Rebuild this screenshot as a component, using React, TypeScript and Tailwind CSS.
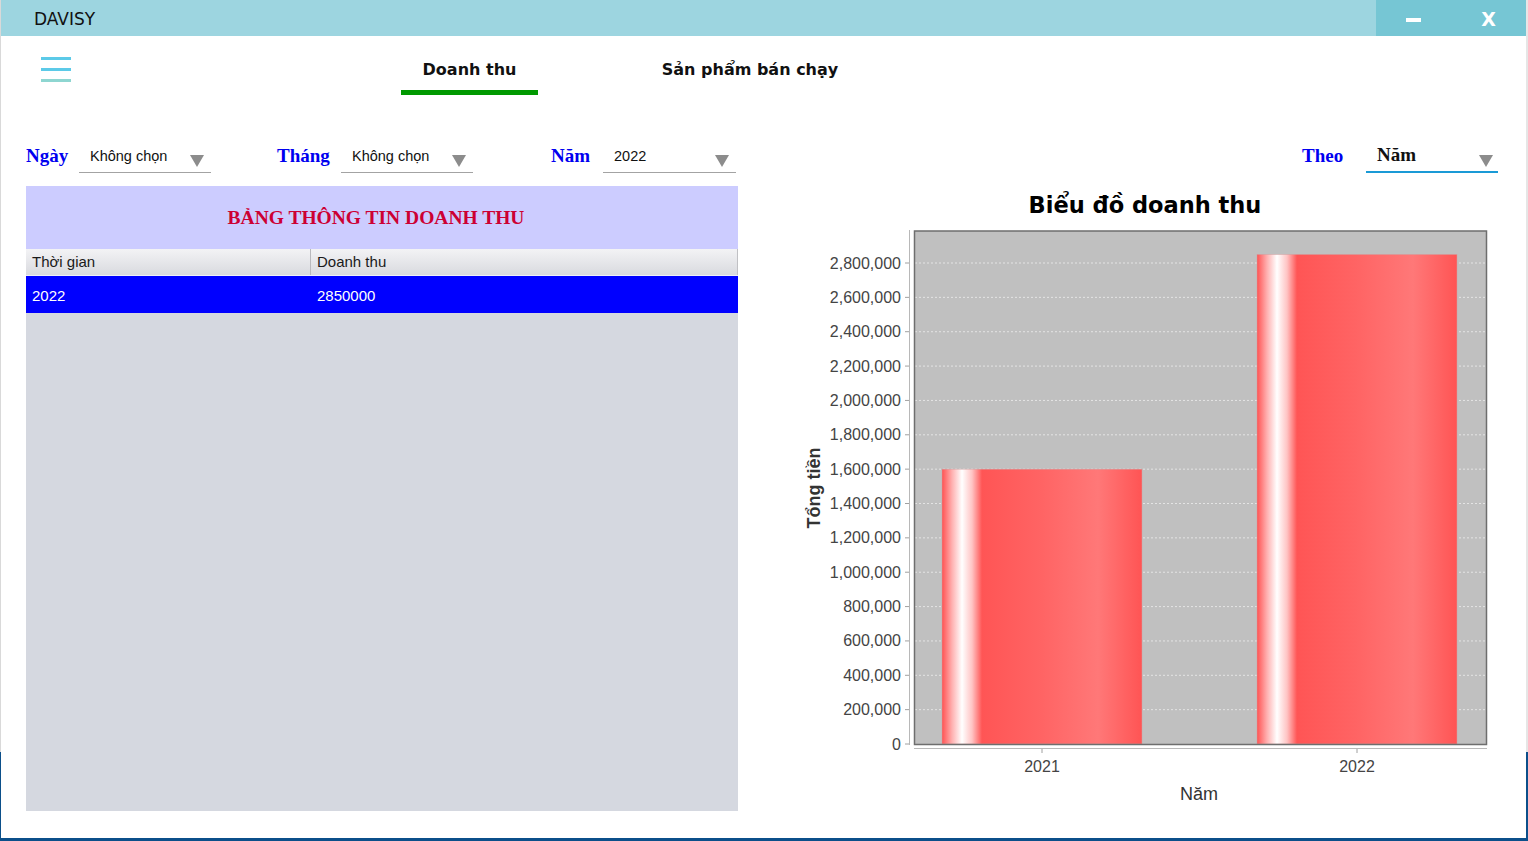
import React from 'react';

const ticks = Array.from({ length: 15 }, (_, i) => i * 200000);
const yOf = (v: number) => 744 - (v / 2800000) * 481;

const bars = [
  { label: '2021', x: 942, value: 1600000, center: 1042 },
  { label: '2022', x: 1257, value: 2850000, center: 1357 },
];

const Arrow = () => (
  <svg width="14" height="12" viewBox="0 0 14 12" className="shrink-0">
    <polygon points="0,0 14,0 7,12" fill="#8c8c8c" />
  </svg>
);

const Combo = ({ value, width }: { value: string; width: string }) => (
  <div className={`${width} h-[34px] flex items-center border-b border-[#a3a3a3]`}>
    <span className="pl-[11px] mt-[3px] text-[14.5px] text-[#111] font-['Liberation_Sans',sans-serif]">{value}</span>
    <div className="ml-auto mr-[7px] mt-[11px]">
      <Arrow />
    </div>
  </div>
);

const Label = ({ text, width }: { text: string; width: string }) => (
  <div className={`${width} h-[34px] flex items-center`}>
    <span className="text-[19px] font-bold text-[#0000f0] font-['Liberation_Serif',serif]">{text}</span>
  </div>
);

const Chart = () => (
  <svg width="710" height="625" viewBox="790 186 710 625" className="block">
    <defs>
      <linearGradient id="barFill" x1="0" y1="0" x2="1" y2="0">
        <stop offset="0" stopColor="#ff5252" />
        <stop offset="0.05" stopColor="#ffb0b0" />
        <stop offset="0.1" stopColor="#ffffff" />
        <stop offset="0.15" stopColor="#ffc4c4" />
        <stop offset="0.2" stopColor="#ff5555" />
        <stop offset="0.5" stopColor="#ff6464" />
        <stop offset="0.78" stopColor="#ff7878" />
        <stop offset="1" stopColor="#ff5454" />
      </linearGradient>
    </defs>

    <text
      x="1145"
      y="213"
      textAnchor="middle"
      fontFamily="DejaVu Sans, sans-serif"
      fontWeight="bold"
      fontSize="22.5"
      fill="#000"
    >
      Biểu đồ doanh thu
    </text>

    {/* plot area */}
    <rect x="914" y="231" width="572" height="513" fill="#c0c0c0" />
    {ticks.slice(1).map((t) => (
      <line
        key={t}
        x1="915"
        x2="1486"
        y1={yOf(t)}
        y2={yOf(t)}
        stroke="#e4e4e4"
        strokeWidth="1"
        strokeDasharray="2 2"
      />
    ))}

    {bars.map((b) => (
      <rect
        key={b.label}
        x={b.x}
        y={yOf(b.value)}
        width="200"
        height={744 - yOf(b.value)}
        fill="url(#barFill)"
        stroke="#d0a0a0"
        strokeWidth="0.5"
      />
    ))}

    <rect x="914.5" y="231" width="572" height="513.5" fill="none" stroke="#6e6e6e" strokeWidth="1.5" />

    {/* y axis */}
    <line x1="909.5" x2="909.5" y1="230" y2="745" stroke="#b8b8b8" />
    {ticks.map((t) => (
      <g key={t}>
        <line x1="905" x2="909" y1={yOf(t)} y2={yOf(t)} stroke="#a0a0a0" />
        <text
          x="901"
          y={yOf(t) + 5.5}
          textAnchor="end"
          fontFamily="Liberation Sans, sans-serif"
          fontSize="16"
          fill="#444"
        >
          {t.toLocaleString('en-US')}
        </text>
      </g>
    ))}
    <text
      x="814"
      y="488"
      transform="rotate(-90 814 488)"
      textAnchor="middle"
      dominantBaseline="central"
      fontFamily="Liberation Sans, sans-serif"
      fontSize="18"
      fontWeight="bold"
      fill="#333"
    >
      Tổng tiền
    </text>

    {/* x axis */}
    <line x1="914" x2="1487" y1="748.5" y2="748.5" stroke="#b8b8b8" />
    {bars.map((b) => (
      <g key={b.label}>
        <line x1={b.center} x2={b.center} y1="749" y2="753" stroke="#a0a0a0" />
        <text
          x={b.center}
          y="772"
          textAnchor="middle"
          fontFamily="Liberation Sans, sans-serif"
          fontSize="16"
          fill="#444"
        >
          {b.label}
        </text>
      </g>
    ))}
    <text
      x="1199"
      y="800"
      textAnchor="middle"
      fontFamily="Liberation Sans, sans-serif"
      fontSize="18"
      fill="#333"
    >
      Năm
    </text>
  </svg>
);

const App = () => {
  return (
    <div className="w-[1528px] h-[841px] overflow-hidden bg-white flex flex-col">
      <div className="flex h-[838px]">
        {/* window edge left */}
        <div className="w-px flex flex-col">
          <div className="h-[752px] bg-[#d9d9d9]" />
          <div className="flex-1 bg-[#0b4f8a]" />
        </div>

        <div className="w-[1525px] flex flex-col bg-white">
          {/* Title bar */}
          <div className="h-[36px] flex items-center bg-[#9dd5e0]">
            <span className="pl-[33px] mt-[3px] text-[17px] text-[#111] font-['DejaVu_Sans',sans-serif]">DAVISY</span>
            <div className="ml-auto h-full w-[150px] flex bg-[#76c6d4]">
              <div className="w-[75px] flex items-center justify-center">
                <div className="w-[15px] h-[4px] bg-white mt-[3px]" />
              </div>
              <div className="w-[75px] flex items-center justify-center">
                <span className="text-[19px] font-bold text-white font-['DejaVu_Sans',sans-serif] mt-[3px]">X</span>
              </div>
            </div>
          </div>

          {/* Nav row */}
          <div className="h-[60px] flex items-start">
            <div className="ml-[40px] mt-[21px] w-[30px] flex flex-col gap-[8px]">
              <div className="h-[3px] bg-[#5ccae8]" />
              <div className="h-[3px] bg-[#5ccae8]" />
              <div className="h-[3px] bg-[#8ed6d1]" />
            </div>
            <div className="ml-[330px] w-[137px] h-full flex flex-col items-center">
              <span className="pt-[24px] leading-[20px] text-[16px] font-bold text-[#111] font-['DejaVu_Sans',sans-serif]">
                Doanh thu
              </span>
              <div className="mt-auto mb-[1px] w-full h-[5px] bg-[#009900]" />
            </div>
            <div className="ml-[107px] w-[210px] h-full flex flex-col items-center">
              <span className="pt-[24px] leading-[20px] text-[16px] font-bold text-[#111] font-['DejaVu_Sans',sans-serif]">
                Sản phẩm bán chạy
              </span>
            </div>
          </div>

          {/* Body */}
          <div className="flex flex-1">
            {/* Left column */}
            <div className="ml-[25px] w-[712px] flex flex-col">
              <div className="mt-[43px] flex">
                <Label text="Ngày" width="w-[53px]" />
                <Combo value="Không chọn" width="w-[132px]" />
                <div className="ml-[66px] flex">
                  <Label text="Tháng" width="w-[64px]" />
                  <Combo value="Không chọn" width="w-[132px]" />
                </div>
                <div className="ml-[78px] flex">
                  <Label text="Năm" width="w-[52px]" />
                  <Combo value="2022" width="w-[133px]" />
                </div>
              </div>

              {/* Table */}
              <div className="mt-[13px] h-[625px] flex flex-col bg-[#d5d8e0]">
                <div className="h-[63px] flex items-center justify-center pr-[12px] bg-[#ccccff]">
                  <span className="text-[19.5px] font-bold text-[#cc0033] font-['Liberation_Serif',serif]">
                    BẢNG THÔNG TIN DOANH THU
                  </span>
                </div>
                <div className="h-[27px] flex bg-gradient-to-b from-[#f3f3f5] to-[#d9dadf] border-b border-[#eef0f8] text-[15px] text-[#1a1a1a] font-['Liberation_Sans',sans-serif]">
                  <div className="w-[285px] flex items-center pl-[6px] border-r border-[#b9b9bd]">Thời gian</div>
                  <div className="flex-1 flex items-center pl-[6px] border-r border-[#c0c0c4]">Doanh thu</div>
                </div>
                <div className="h-[37px] flex bg-[#0000ff] text-[15px] text-white font-['Liberation_Sans',sans-serif]">
                  <div className="w-[285px] flex items-center pl-[6px] mt-[3px]">2022</div>
                  <div className="flex-1 flex items-center pl-[6px] mt-[3px]">2850000</div>
                </div>
              </div>
            </div>

            {/* Right column */}
            <div className="flex-1 flex flex-col">
              <div className="mt-[43px] flex justify-end pr-[28px]">
                <Label text="Theo" width="w-[64px]" />
                <div className="w-[132px] h-[34px] flex items-center border-b-2 border-[#1a9ad6]">
                  <span className="pl-[11px] text-[19px] font-bold text-[#111] font-['Liberation_Serif',serif]">
                    Năm
                  </span>
                  <div className="ml-auto mr-[5px] mt-[11px]">
                    <Arrow />
                  </div>
                </div>
              </div>
              <div className="ml-[52px] mt-[13px]">
                <Chart />
              </div>
            </div>
          </div>
        </div>

        {/* window edge right */}
        <div className="w-[2px] flex flex-col">
          <div className="h-[752px] bg-[#e6e6e6]" />
          <div className="flex-1 bg-[#0b4f8a]" />
        </div>
      </div>
      <div className="h-[3px] bg-[#0b4f8a]" />
    </div>
  );
};

export default App;
